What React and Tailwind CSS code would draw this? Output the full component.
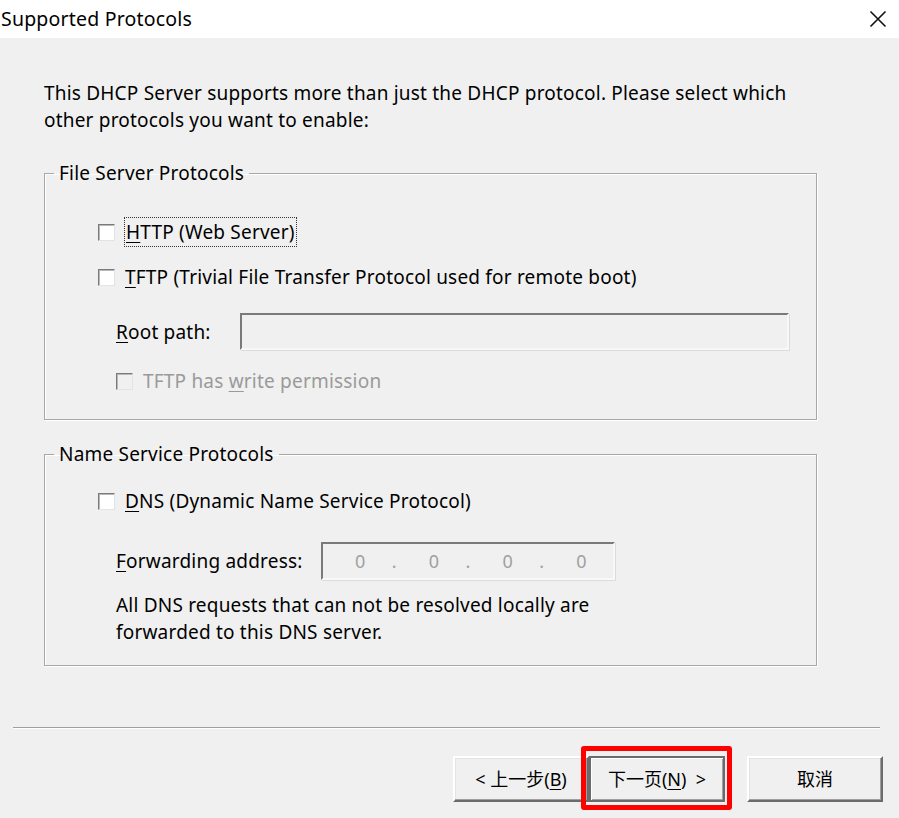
import React from "react";

const font = { fontFamily: '"Noto Sans", "Noto Sans CJK SC", sans-serif' };

function Check({ disabled }) {
  return (
    <span
      className={`inline-block w-[17px] h-[17px] shrink-0 border border-t-[#7a7a7a] border-l-[#7a7a7a] border-b-[#e3e3e3] border-r-[#e3e3e3] shadow-[inset_1px_1px_0_#b8b8b8] ${
        disabled ? "bg-[#f0f0f0]" : "bg-white"
      }`}
    />
  );
}

function Group({ title, children, className }) {
  return (
    <fieldset
      className={`border border-[#a8a8a8] shadow-[inset_1px_1px_0_#ffffff,1px_1px_0_#ffffff] mx-0 px-0 ${className}`}
    >
      <legend className="ml-[9px] px-[5px] text-[19px] tracking-[0.2px] leading-[24px] text-black">{title}</legend>
      {children}
    </fieldset>
  );
}

function Btn({ children, focused }) {
  return (
    <div
      className={`w-[136px] h-[46px] flex items-center justify-center text-[18px] text-black bg-[#f0f0f0] border-[2px] ${
        focused
          ? "border-[#6b6b6b] shadow-[inset_1px_1px_0_#ffffff,inset_-1px_-1px_0_#a0a0a0]"
          : "border-t-[#ffffff] border-l-[#ffffff] border-b-[#6b6b6b] border-r-[#6b6b6b] shadow-[inset_-1px_-1px_0_#a0a0a0,inset_1px_1px_0_#e3e3e3]"
      }`}
    >
      {children}
    </div>
  );
}

export default function App() {
  return (
    <div className="w-[899px] h-[818px] bg-[#f0f0f0] flex flex-col text-black overflow-hidden" style={font}>
      <div className="h-[38px] bg-white flex items-center justify-between shrink-0">
        <span className="pl-[1px] text-[19.5px] tracking-[0.2px] leading-none">Supported Protocols</span>
        <svg width="18" height="18" viewBox="0 0 18 18" className="mr-[12px]">
          <path d="M1.5 1.5 L16.5 16.5 M16.5 1.5 L1.5 16.5" stroke="#111" strokeWidth="1.6" />
        </svg>
      </div>

      <div className="px-[44px] pt-[42px] flex flex-col w-[861px] text-[19px] tracking-[0.2px]">
        <p className="leading-[27px] m-0">
          This DHCP Server supports more than just the DHCP protocol. Please select which
          <br />
          other protocols you want to enable:
        </p>

        <Group title="File Server Protocols" className="mt-[27px] h-[259px] w-[773px]">
          <div className="flex flex-col pl-[53px] leading-[24px]">
            <div className="flex items-center gap-[9px] mt-[32px]">
              <Check />
              <span className="border border-dotted border-[#333] px-[1px] py-[2px]">
                <u className="underline-offset-[3px]">H</u>TTP (Web Server)
              </span>
            </div>
            <div className="flex items-center gap-[10px] mt-[18px]">
              <Check />
              <span>
                <u className="underline-offset-[3px]">T</u>FTP (Trivial File Transfer Protocol used for remote boot)
              </span>
            </div>
            <div className="flex items-center mt-[24px] pl-[18px]">
              <span className="w-[124px]">
                <u className="underline-offset-[3px]">R</u>oot path:
              </span>
              <div className="w-[549px] h-[37px] bg-[#f0f0f0] border-[2px] border-t-[#7a7a7a] border-l-[#7a7a7a] border-b-[#f8f8f8] border-r-[#f8f8f8] shadow-[1px_1px_0_#dcdcdc]" />
            </div>
            <div className="flex items-center gap-[10px] mt-[19px] pl-[18px] text-[#9a9a9a]">
              <Check disabled />
              <span>
                TFTP has <u className="underline-offset-[3px]">w</u>rite permission
              </span>
            </div>
          </div>
        </Group>

        <Group title="Name Service Protocols" className="mt-[22px] h-[224px] w-[773px]">
          <div className="flex flex-col pl-[53px] leading-[24px]">
            <div className="flex items-center gap-[10px] mt-[23px]">
              <Check />
              <span>
                <u className="underline-offset-[3px]">D</u>NS (Dynamic Name Service Protocol)
              </span>
            </div>
            <div className="flex items-center mt-[29px] pl-[18px]">
              <span className="w-[205px]">
                <u className="underline-offset-[3px]">F</u>orwarding address:
              </span>
              <div className="w-[294px] h-[38px] bg-[#f0f0f0] border-[2px] border-t-[#7a7a7a] border-l-[#7a7a7a] border-b-[#f8f8f8] border-r-[#f8f8f8] shadow-[1px_1px_0_#dcdcdc] flex items-center pl-[32px] text-[#a0a0a0] text-[18px]">
                <span className="w-[37px]">0</span>
                <span className="w-[37px]">.</span>
                <span className="w-[37px]">0</span>
                <span className="w-[37px]">.</span>
                <span className="w-[37px]">0</span>
                <span className="w-[37px]">.</span>
                <span className="w-[37px]">0</span>
              </div>
            </div>
            <p className="m-0 mt-[12px] pl-[18px] leading-[27px]">
              All DNS requests that can not be resolved locally are
              <br />
              forwarded to this DNS server.
            </p>
          </div>
        </Group>
      </div>

      <div className="mt-[61px] mx-[13px] w-[867px] h-[2px] border-t border-t-[#a0a0a0] border-b border-b-white" />

      <div className="flex justify-end pr-[16px] mt-[27px]">
        <Btn>
          &lt; 上一步(<u className="underline-offset-[3px]">B</u>)
        </Btn>
        <div className="relative">
          <Btn focused>
            下一页(<u className="underline-offset-[3px]">N</u>)&nbsp; &gt;
          </Btn>
          <div className="absolute left-[-8px] top-[-10px] w-[151px] h-[64px] border-[5px] border-[#ff0000] rounded-[3px]" />
        </div>
        <div className="w-[22px]" />
        <Btn>取消</Btn>
      </div>
    </div>
  );
}
